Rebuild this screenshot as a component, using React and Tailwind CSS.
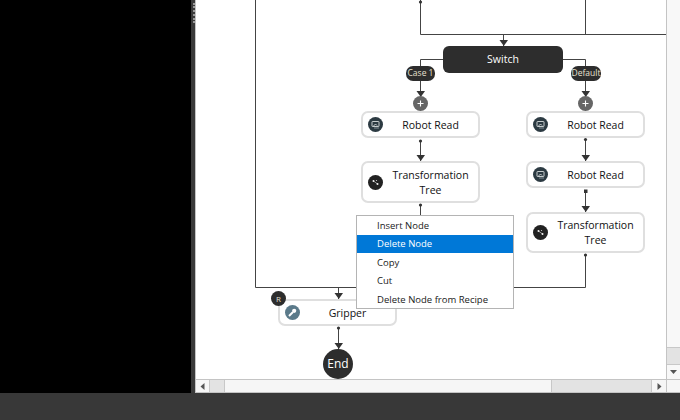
const FONT = "font-['Open_Sans','Liberation_Sans',sans-serif]";

function ReadIcon() {
  return (
    <span className="flex h-[15px] w-[15px] shrink-0 items-center justify-center rounded-full bg-[#2c3a42]">
      <svg width="11" height="11" viewBox="0 0 11 11" fill="none">
        <rect x="2" y="2.500" width="7" height="5" rx="0.5" stroke="#d8dcde" strokeWidth="0.9" />
        <path d="M3.500 7 5.500 5 7 6.500" stroke="#d8dcde" strokeWidth="0.9" />
        <path d="M4 9h5" stroke="#8f9ba2" strokeWidth="0.9" />
      </svg>
    </span>
  );
}

function TreeIcon() {
  return (
    <span className="flex h-[15px] w-[15px] shrink-0 items-center justify-center rounded-full bg-[#222222]">
      <svg width="11" height="11" viewBox="0 0 11 11" fill="none">
        <path d="M3.500 4 7.500 7" stroke="#bdbdbd" strokeWidth="0.7" />
        <circle cx="3.500" cy="4" r="1" fill="#f2f2f2" />
        <circle cx="7.500" cy="7" r="1" fill="#f2f2f2" />
        <circle cx="6.500" cy="3.500" r="0.6" fill="#d0d0d0" />
      </svg>
    </span>
  );
}

function GripIcon() {
  return (
    <span className="flex h-[15px] w-[15px] shrink-0 items-center justify-center rounded-full bg-[#5b7a8a]">
      <svg width="11" height="11" viewBox="0 0 11 11" fill="none">
        <path d="M2 9 6 5" stroke="#ffffff" strokeWidth="2" />
        <circle cx="7.200" cy="3.800" r="2.100" fill="#ffffff" />
      </svg>
    </span>
  );
}

function Node({ pos, icon, children }) {
  return (
    <div className={`absolute flex w-[119px] items-center rounded-[7px] border-2 border-[#dfdfdf] bg-white pl-[5px] text-[10.500px] leading-[15px] text-[#111111] ${pos}`}>
      {icon}
      <div className="flex-1 pt-[1px] text-center">{children}</div>
    </div>
  );
}

function Plus({ pos }) {
  return (
    <span className={`absolute flex h-[15px] w-[15px] items-center justify-center rounded-full bg-[#666666] ${pos}`}>
      <svg width="7" height="7" viewBox="0 0 7 7"><path d="M0.500 3.500h6M3.500 0.500v6" stroke="#ffffff" strokeWidth="1.100" /></svg>
    </span>
  );
}

function Pill({ pos, children }) {
  return (
    <span className={`absolute flex h-[15px] items-center justify-center rounded-[7px] bg-[#2d2d2d] text-[8.500px] text-[#e6e0d0] ${pos}`}>
      {children}
    </span>
  );
}

function Arrow({ x, y }) {
  return <path d={`M${x - 4} ${y - 6}h8.5l-4.2 6z`} fill="#333333" />;
}

function Connectors() {
  const s = { stroke: "#444444", strokeWidth: 1, fill: "none" };
  return (
    <svg className="absolute inset-0" width="470" height="379" viewBox="196 0 470 379">
      <path {...s} d="M255.5 0V287.5H585.5V255" />
      <path {...s} d="M420.5 0V34.5H666M585.5 0V34.5M503.5 34.5V46" />
      <path {...s} d="M443 59.5H420.5V111M563 59.5H585.5V111" />
      <path {...s} d="M420.5 140V161M420.5 204V216" />
      <path {...s} d="M585.5 140V161M585.5 190V212" />
      <path {...s} d="M338.5 287.5V299M338.5 327V350" />
      <Arrow x={503.5} y={46} />
      <Arrow x={420.5} y={97} />
      <Arrow x={585.5} y={97} />
      <Arrow x={420.5} y={161} />
      <Arrow x={585.5} y={161} />
      <Arrow x={585.5} y={212} />
      <Arrow x={338.5} y={299} />
      <Arrow x={338.5} y={349} />
      <circle cx="420.5" cy="2" r="1.6" fill="#333333" />
      <circle cx="420.5" cy="141" r="1.6" fill="#333333" />
      <circle cx="420.5" cy="205" r="1.6" fill="#333333" />
      <circle cx="585.5" cy="139.500" r="1.6" fill="#333333" />
      <rect x="584" y="189.500" width="3.500" height="3.500" fill="#333333" />
      <circle cx="585.5" cy="255" r="1.6" fill="#333333" />
      <circle cx="338.5" cy="328" r="1.6" fill="#333333" />
    </svg>
  );
}

function Menu() {
  const row = "h-[18.400px] pl-[20px] pt-[1px] flex items-center";
  return (
    <div className="absolute left-[160px] top-[215px] flex w-[158px] flex-col border border-[#b4b4b4] bg-white pt-[0.500px] text-[9.500px] text-[#1a1a1a]">
      <div className={row}>Insert Node</div>
      <div className={`${row} bg-[#0078d7] text-white`}>Delete Node</div>
      <div className={row}>Copy</div>
      <div className={row}>Cut</div>
      <div className={row}>Delete Node from Recipe</div>
    </div>
  );
}

function Tri({ d }) {
  return <svg width="9" height="9" viewBox="0 0 9 9"><path d={d} fill="#555555" /></svg>;
}

export default function App() {
  return (
    <div className={`flex h-[420px] w-[680px] flex-col overflow-hidden bg-[#383838] ${FONT}`}>
      <div className="flex h-[393px]">
        <div className="w-[191px] bg-black" />
        <div className="flex w-[4px] flex-col bg-[#3a3a3a] pt-[3px]">
          <div className="h-[20px] border-r-2 border-dotted border-[#9a9a9a]" />
        </div>
        <div className="flex w-[485px] flex-col border-l border-[#c4c4c4]">
          <div className="flex h-[379px]">
            <div className="relative w-[470px] bg-white">
              <Connectors />
              <div className="absolute left-[247px] top-[46px] flex h-[27px] w-[120px] items-center justify-center rounded-[6px] bg-[#2d2d2d] pt-[1px] text-[10.500px] text-white">Switch</div>
              <Pill pos="left-[210px] top-[66px] w-[29px]">Case 1</Pill>
              <Pill pos="left-[375px] top-[66px] w-[30px]">Default</Pill>
              <Plus pos="left-[217px] top-[96px]" />
              <Plus pos="left-[382px] top-[96px]" />
              <Node pos="left-[165px] top-[111px] h-[27px]" icon={<ReadIcon />}>Robot Read</Node>
              <Node pos="left-[165px] top-[161px] h-[42px]" icon={<TreeIcon />}>Transformation<br />Tree</Node>
              <Node pos="left-[330px] top-[111px] h-[27px]" icon={<ReadIcon />}>Robot Read</Node>
              <Node pos="left-[330px] top-[161px] h-[27px]" icon={<ReadIcon />}>Robot Read</Node>
              <Node pos="left-[330px] top-[212px] h-[41px]" icon={<TreeIcon />}>Transformation<br />Tree</Node>
              <Node pos="left-[82px] top-[299px] h-[27px]" icon={<GripIcon />}>Gripper</Node>
              <span className="absolute left-[75px] top-[291px] flex h-[15px] w-[15px] items-center justify-center rounded-full bg-[#2d2d2d] text-[8px] text-[#e6e0d0]">R</span>
              <div className="absolute left-[127px] top-[349px] flex h-[30px] w-[30px] items-center justify-center rounded-full bg-[#2d2d2d] text-[12px] text-white">End</div>
              <Menu />
            </div>
            <div className="flex w-[14px] flex-col border-l border-[#c4c4c4] bg-[#f8f8f8]">
              <div className="h-[347px]" />
              <div className="h-[18px] border-y border-[#c8c8c8] bg-[#e3e3e3]" />
              <div className="flex flex-1 items-center justify-center"><Tri d="M1 2h7L4.500 6z" /></div>
            </div>
          </div>
          <div className="flex h-[14px] items-stretch border-y border-[#c4c4c4] bg-[#f6f6f6]">
            <div className="flex w-[13px] items-center justify-center"><Tri d="M6.500 1v7L2.500 4.500z" /></div>
            <div className="w-[16px] border-x border-[#c8c8c8] bg-[#e3e3e3]" />
            <div className="w-[326px]" />
            <div className="w-[101px] border-x border-[#c8c8c8] bg-[#e3e3e3]" />
            <div className="flex w-[14px] items-center justify-center"><Tri d="M2.500 1v7L6.500 4.500z" /></div>
            <div className="flex-1 border-l border-[#c4c4c4]" />
          </div>
        </div>
      </div>
      <div className="h-[27px] bg-[#383838]" />
    </div>
  );
}
